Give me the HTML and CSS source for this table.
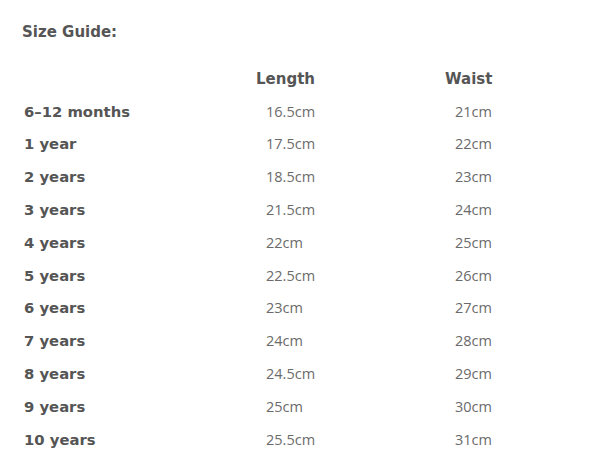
FILE: index.html
```html
<!DOCTYPE html>
<html>
<head>
<meta charset="utf-8">
<link rel="stylesheet" href="styles.css">
</head>
<body>
<div class="guide">
  <div class="title">Size Guide:</div>
  <div class="table">
    <div class="row head"><div class="label"></div><div class="col">Length</div><div class="col">Waist</div></div>
    <div class="row"><div class="label">6–12 months</div><div class="val">16.5cm</div><div class="val">21cm</div></div>
    <div class="row"><div class="label">1 year</div><div class="val">17.5cm</div><div class="val">22cm</div></div>
    <div class="row"><div class="label">2 years</div><div class="val">18.5cm</div><div class="val">23cm</div></div>
    <div class="row"><div class="label">3 years</div><div class="val">21.5cm</div><div class="val">24cm</div></div>
    <div class="row"><div class="label">4 years</div><div class="val">22cm</div><div class="val">25cm</div></div>
    <div class="row"><div class="label">5 years</div><div class="val">22.5cm</div><div class="val">26cm</div></div>
    <div class="row"><div class="label">6 years</div><div class="val">23cm</div><div class="val">27cm</div></div>
    <div class="row"><div class="label">7 years</div><div class="val">24cm</div><div class="val">28cm</div></div>
    <div class="row"><div class="label">8 years</div><div class="val">24.5cm</div><div class="val">29cm</div></div>
    <div class="row"><div class="label">9 years</div><div class="val">25cm</div><div class="val">30cm</div></div>
    <div class="row"><div class="label">10 years</div><div class="val">25.5cm</div><div class="val">31cm</div></div>
  </div>
</div>
</body>
</html>
```
FILE: styles.css
```css
html, body {
  margin: 0;
  padding: 0;
  background: #ffffff;
}
body {
  font-family: "DejaVu Sans", sans-serif;
  color: #555555;
  font-size: 15px;
}
.guide {
  padding: 22px 0 0 22px;
}
.title {
  font-weight: bold;
  font-size: 15px;
  line-height: 20px;
  height: 22px;
}
.table {
  margin-top: 20px;
  padding-left: 2px;
}
.row {
  display: grid;
  grid-template-columns: 232px 189px 1fr;
  height: 32.8px;
  align-items: center;
}
.head {
  height: 30.8px;
}
.label {
  font-weight: bold;
  font-size: 14.8px;
}
.head .col {
  font-weight: bold;
  font-size: 15px;
}
.val {
  padding-left: 10px;
  font-family: "Open Sans", sans-serif;
  font-size: 14.5px;
  font-weight: 400;
  color: #6b6b6b;
}
```
